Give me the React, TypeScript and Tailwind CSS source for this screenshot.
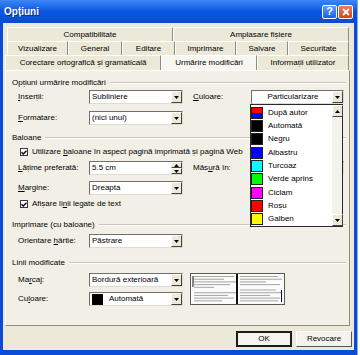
import React from "react";

const font = "font-['Liberation_Sans',Arial,sans-serif]";

function ArrowBtn({ up }: { up?: boolean }) {
  return (
    <div className="w-[11px] h-full shrink-0 bg-[#ECE9D8] border border-t-white border-l-white border-r-[#404040] border-b-[#404040] flex items-center justify-center">
      <svg width="5" height="3" viewBox="0 0 5 3">
        <path d={up ? "M0 3h5L2.5 0z" : "M0 0h5L2.5 3z"} fill="#000" />
      </svg>
    </div>
  );
}

function Select({
  children,
  className,
  center,
}: {
  children?: React.ReactNode;
  className: string;
  center?: boolean;
}) {
  return (
    <div
      className={`flex h-[14px] bg-white border border-t-[#6f6f6f] border-l-[#6f6f6f] border-r-[#dedbd0] border-b-[#dedbd0] ${className}`}
    >
      <div className={`flex-1 flex items-center pl-[2px] ${center ? "justify-center" : ""}`}>{children}</div>
      <ArrowBtn />
    </div>
  );
}

function Check({ label }: { label: React.ReactNode }) {
  return (
    <div className="flex items-center h-[10px] pl-[8px]">
      <div className="w-[8px] h-[8px] bg-white border border-[#3a3a3a] flex items-center justify-center">
        <svg width="6" height="5" viewBox="0 0 6 5">
          <path d="M0.5 2.3L2.2 4L5.5 0.7" stroke="#000" strokeWidth="1.3" fill="none" />
        </svg>
      </div>
      <span className="ml-[4px]">{label}</span>
    </div>
  );
}

function Group({ label, className }: { label: string; className: string }) {
  return (
    <div className={`flex items-center h-[10px] ${className}`}>
      <span>{label}</span>
      <div className="flex-1 ml-[4px] mr-[3px] h-[2px] border-t border-t-[#c9c6b6] border-b border-b-white" />
    </div>
  );
}

const colors: [string, string][] = [
  ["După autor", "split"],
  ["Automată", "#000000"],
  ["Negru", "#000000"],
  ["Albastru", "#0000ff"],
  ["Turcoaz", "#00ffff"],
  ["Verde aprins", "#00ff00"],
  ["Ciclam", "#ff00ff"],
  ["Roșu", "#ff0000"],
  ["Galben", "#ffff00"],
];

function ColorList() {
  return (
    <div className="absolute left-[-1px] top-full w-[93px] h-[123px] bg-white border border-[#2a2a2a] flex z-10">
      <div className="flex-1 flex flex-col pt-[1px]">
        {colors.map(([name, c]) => (
          <div key={name} className="h-[13.5px] flex items-center">
            {c === "split" ? (
              <div className="w-[12px] h-[12px] border border-[#222] flex flex-col">
                <div className="flex-1 bg-[#ff0000]" />
                <div className="flex-1 bg-[#0000ff]" />
              </div>
            ) : (
              <div className="w-[12px] h-[12px] border border-[#222]" style={{ backgroundColor: c }} />
            )}
            <span className="ml-[5px]">{name}</span>
          </div>
        ))}
      </div>
      <div className="w-[10px] flex flex-col bg-[#f3f2ec]">
        <div className="h-[12px]">
          <ArrowBtn up />
        </div>
        <div className="flex-1" />
        <div className="h-[12px]">
          <ArrowBtn />
        </div>
      </div>
    </div>
  );
}

function Preview() {
  const left = [40, 30, 42, 36, 20, 0, 42, 34, 40, 28];
  const right = [38, 42, 26, 40, 0, 36, 42, 30, 40, 38];
  return (
    <svg width="95" height="32" viewBox="0 0 95 32" className="ml-[7px]">
      <rect x="0.5" y="0.5" width="94" height="31" fill="#fbfbfb" stroke="#5a5a5a" />
      {left.map((w, i) =>
        w ? <rect key={"l" + i} x={4} y={3 + i * 2.7} width={w} height="1" fill="#a5a5a5" /> : null
      )}
      {right.map((w, i) =>
        w ? <rect key={"r" + i} x={50} y={3 + i * 2.7} width={w} height="1" fill="#a5a5a5" /> : null
      )}
      <rect x="46" y="1" width="2" height="30" fill="#111" />
      <rect x="2.5" y="3" width="1" height="11" fill="#111" />
      <rect x="91" y="17" width="1" height="12" fill="#111" />
    </svg>
  );
}

function Tab({ label, w, sel }: { label: string; w: string; sel?: boolean }) {
  return (
    <div
      className={`${w} h-full flex items-center justify-center border-t border-t-white border-l border-l-white border-r border-r-[#8c8c86] ${
        sel ? "bg-[#f7f6f0]" : ""
      }`}
    >
      {label}
    </div>
  );
}

export default function App() {
  return (
    <div className={`w-[360px] h-[355px] flex bg-white overflow-hidden text-[8px] leading-[10px] text-black ${font}`}>
      <div className="w-[357px] h-full flex flex-col">
        {/* title bar */}
        <div className="h-[23px] flex items-center bg-gradient-to-b from-[#3d87f6] via-[#0756e0] to-[#0a4bd4] pl-[4px] pr-[4px]">
          <span className="text-white font-bold text-[10px] leading-[12px] [text-shadow:1px_1px_0_#0a2a8a] flex-1">Opțiuni</span>
          <div className="w-[15px] h-[14px] rounded-[2px] border border-white bg-gradient-to-b from-[#5b9bff] to-[#1f5fe6] flex items-center justify-center text-white font-bold text-[11px] leading-none">
            ?
          </div>
          <div className="w-[15px] h-[14px] ml-[1px] rounded-[2px] border border-white bg-gradient-to-b from-[#ee7b5c] to-[#d4401f] flex items-center justify-center">
            <svg width="8" height="8" viewBox="0 0 8 8">
              <path d="M1 1L7 7M7 1L1 7" stroke="#fff" strokeWidth="1.8" />
            </svg>
          </div>
        </div>

        {/* body */}
        <div className="flex-1 flex flex-col bg-[#ECE9D8] border-l-[3px] border-r-[3px] border-b-[5px] border-[#0a4cd8] pt-[4px]">
          {/* tabs */}
          <div className="flex h-[14px] ml-[4px]">
            <Tab label="Compatibilitate" w="w-[166px]" />
            <Tab label="Amplasare fișiere" w="w-[176px]" />
          </div>
          <div className="flex h-[14px] ml-[4px]">
            <Tab label="Vizualizare" w="w-[61px]" />
            <Tab label="General" w="w-[54px]" />
            <Tab label="Editare" w="w-[53px]" />
            <Tab label="Imprimare" w="w-[61px]" />
            <Tab label="Salvare" w="w-[52px]" />
            <Tab label="Securitate" w="w-[61px]" />
          </div>
          <div className="flex h-[15px] ml-[2px]">
            <Tab label="Corectare ortografică și gramaticală" w="w-[156px]" />
            <Tab label="Urmărire modificări" w="w-[96px]" sel />
            <Tab label="Informații utilizator" w="w-[92px]" />
          </div>

          {/* panel */}
          <div className="ml-[2px] w-[345px] h-[256px] bg-[#f2f0e6] border border-t-white border-l-white border-r-[#8d8b80] border-b-[#8d8b80] flex flex-col pl-[6px] pt-[7px]">
            <Group label="Opțiuni urmărire modificări" className="" />
            <div className="flex items-center mt-[2px] pl-[6px]">
              <span className="w-[71px]">
                <u>I</u>nserții:
              </span>
              <Select className="w-[94px]">Subliniere</Select>
              <span className="ml-[10px] w-[58px]">
                <u>C</u>uloare:
              </span>
              <div className="relative">
                <Select className="w-[93px]" center>
                  Particularizare
                </Select>
                <ColorList />
              </div>
            </div>
            <div className="flex items-center mt-[7px] pl-[6px]">
              <span className="w-[71px]">
                <u>F</u>ormatare:
              </span>
              <Select className="w-[94px]">(nici unul)</Select>
            </div>

            <Group label="Baloane" className="mt-[8px]" />
            <div className="mt-[4px]">
              <Check
                label={
                  <>
                    Utilizare <u>b</u>aloane în aspect pagină imprimată și pagină Web
                  </>
                }
              />
            </div>
            <div className="flex items-center mt-[4px] pl-[6px]">
              <span className="w-[71px]">
                <u>L</u>ățime preferată:
              </span>
              <div className="w-[94px] h-[14px] flex bg-white border border-t-[#6f6f6f] border-l-[#6f6f6f] border-r-[#dedbd0] border-b-[#dedbd0]">
                <div className="flex-1 flex items-center pl-[2px]">5.5 cm</div>
                <div className="w-[11px] flex flex-col">
                  <div className="flex-1">
                    <ArrowBtn up />
                  </div>
                  <div className="flex-1">
                    <ArrowBtn />
                  </div>
                </div>
              </div>
              <span className="ml-[10px] w-[58px]">
                Măs<u>u</u>ră în:
              </span>
              <Select className="w-[93px]" />
            </div>
            <div className="flex items-center mt-[6px] pl-[6px]">
              <span className="w-[71px]">
                <u>M</u>argine:
              </span>
              <Select className="w-[94px]">Dreapta</Select>
            </div>
            <div className="mt-[4px]">
              <Check
                label={
                  <>
                    Afișare li<u>n</u>ii legate de text
                  </>
                }
              />
            </div>

            <Group label="Imprimare (cu baloane)" className="mt-[11px]" />
            <div className="flex items-center mt-[4px] pl-[6px]">
              <span className="w-[71px]">
                Orientare <u>h</u>ârtie:
              </span>
              <Select className="w-[94px]">Păstrare</Select>
            </div>

            <Group label="Linii modificate" className="mt-[10px]" />
            <div className="flex mt-[5px] pl-[6px]">
              <div className="flex flex-col">
                <div className="flex items-center">
                  <span className="w-[71px]">
                    Ma<u>r</u>caj:
                  </span>
                  <Select className="w-[94px]">Bordură exterioară</Select>
                </div>
                <div className="flex items-center mt-[5px]">
                  <span className="w-[71px]">
                    Cu<u>l</u>oare:
                  </span>
                  <Select className="w-[94px]">
                    <div className="w-[11px] h-[11px] bg-black" />
                    <span className="ml-[6px]">Automată</span>
                  </Select>
                </div>
              </div>
              <Preview />
            </div>
          </div>

          {/* buttons */}
          <div className="flex justify-end gap-[4px] pr-[2px] mt-[5px]">
            <div className="w-[56px] h-[16px] bg-[#f4f3ee] border-2 border-[#1b1b1b] flex items-center justify-center">
              OK
            </div>
            <div className="w-[56px] h-[16px] bg-[#f4f3ee] border border-t-white border-l-white border-r-[#555] border-b-[#555] flex items-center justify-center">
              Revocare
            </div>
          </div>
        </div>
      </div>
      <div className="w-[3px] h-full bg-white border-l border-[#8fa8e6]" />
    </div>
  );
}
